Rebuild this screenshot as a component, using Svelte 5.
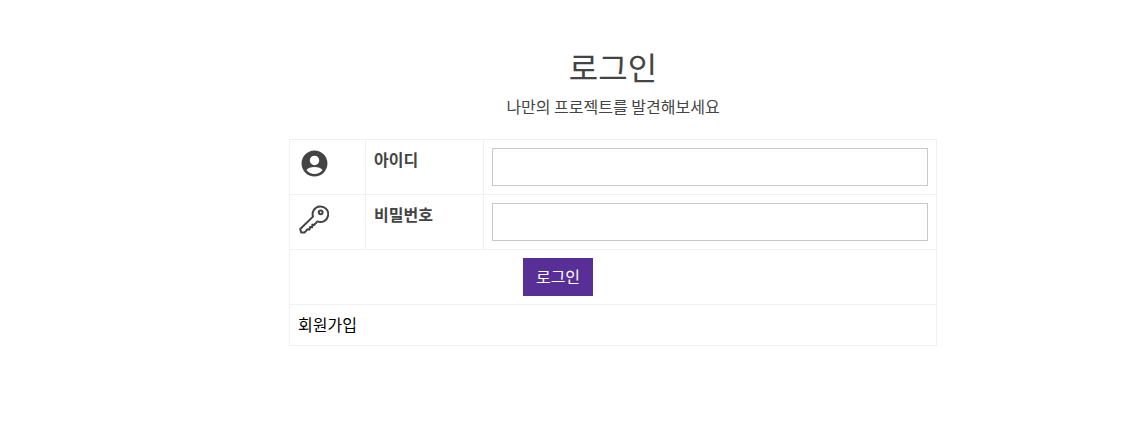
<script lang="ts">
  let username = $state('');
  let password = $state('');
</script>

<main class="login">
  <header class="heading">
    <h1>로그인</h1>
    <p>나만의 프로젝트를 발견해보세요</p>
  </header>

  <table>
    <colgroup>
      <col class="col-icon" />
      <col class="col-label" />
      <col />
    </colgroup>
    <tbody>
      <tr>
        <td class="icon">
          <svg class="person" width="27" height="27" viewBox="0 0 24 24" aria-hidden="true">
            <path
              fill="#444"
              d="M12 0.5a11.5 11.5 0 1 0 0 23 11.5 11.5 0 0 0 0-23zm0 4.6a4.2 4.2 0 1 1 0 8.4 4.2 4.2 0 0 1 0-8.4zm0 16.2a9.3 9.3 0 0 1-7.1-3.3c.9-1.9 4-2.9 7.1-2.9s6.2 1 7.1 2.9a9.3 9.3 0 0 1-7.1 3.3z"
            />
          </svg>
        </td>
        <th scope="row">아이디</th>
        <td><input type="text" bind:value={username} /></td>
      </tr>
      <tr>
        <td class="icon">
          <svg class="key" width="30" height="30" viewBox="0 0 30 30" aria-hidden="true">
            <g fill="none" stroke="#444" stroke-width="2" stroke-linejoin="round">
              <path d="M14 11.6A7.8 7.8 0 1 1 18.4 16.4L15 20L13.4 19.6L13.2 22.2L11 22L10.6 24.4L8.6 24.2L5.4 27.6L2.2 27.6L1.2 24Z" />
              <circle cx="21.7" cy="7.3" r="1.9" />
            </g>
          </svg>
        </td>
        <th scope="row">비밀번호</th>
        <td><input type="password" bind:value={password} /></td>
      </tr>
      <tr>
        <td colspan="3" class="actions">
          <button type="button">로그인</button>
        </td>
      </tr>
      <tr>
        <td colspan="3" class="signup"><a href="#signup">회원가입</a></td>
      </tr>
    </tbody>
  </table>
</main>

<style>
  :global(body) {
    background: #fff;
    font-family: 'Noto Sans CJK KR', 'Noto Sans', sans-serif;
    font-size: 16px;
    color: #444;
  }

  .login {
    box-sizing: border-box;
    width: 648px;
    margin-left: 289px;
    padding-top: 43px;
  }

  .heading {
    text-align: center;
    margin-bottom: 21px;
  }

  h1 {
    margin: 0;
    font-size: 32px;
    font-weight: 400;
    line-height: 46px;
  }

  .heading p {
    margin: 6px 0 0;
    font-size: 16px;
    line-height: 23px;
  }

  table {
    width: 648px;
    table-layout: fixed;
    border-collapse: collapse;
  }

  .col-icon {
    width: 76px;
  }

  .col-label {
    width: 118px;
  }

  td,
  th {
    box-sizing: border-box;
    border: 1px solid #f0f0f0;
    padding: 8px;
    text-align: left;
    vertical-align: top;
    font-size: 16px;
    line-height: 23px;
  }

  th {
    font-weight: 700;
  }

  .icon {
    padding: 10px 0 0 10px;
  }

  .icon svg {
    display: block;
  }

  .person {
    margin-left: 0.5px;
  }

  .key {
    margin-left: -1px;
  }

  input {
    display: block;
    box-sizing: border-box;
    width: 100%;
    height: 38px;
    padding: 0 8px;
    border: 1px solid #c8c8c8;
    border-radius: 0;
    background: #fff;
    outline: none;
  }

  .actions {
    padding-left: 233px;
  }

  .signup {
    padding-bottom: 9px;
  }

  button {
    display: block;
    width: 70px;
    height: 38px;
    padding: 0 0 1px;
    border: 0;
    background: #582f96;
    color: #fff;
    font: inherit;
    cursor: pointer;
  }

  a {
    color: #000;
    text-decoration: none;
  }
</style>
